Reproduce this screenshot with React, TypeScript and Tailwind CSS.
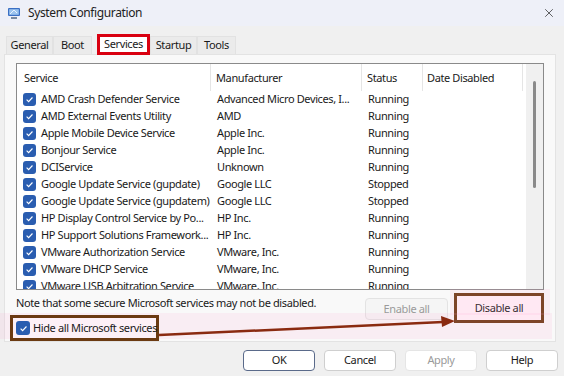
import { X } from "lucide-react";

const font = { fontFamily: '"Segoe UI", "Noto Sans", sans-serif', letterSpacing: "-0.38px" };

const rows = [
  ["AMD Crash Defender Service", "Advanced Micro Devices, I...", "Running"],
  ["AMD External Events Utility", "AMD", "Running"],
  ["Apple Mobile Device Service", "Apple Inc.", "Running"],
  ["Bonjour Service", "Apple Inc.", "Running"],
  ["DCIService", "Unknown", "Running"],
  ["Google Update Service (gupdate)", "Google LLC", "Stopped"],
  ["Google Update Service (gupdatem)", "Google LLC", "Stopped"],
  ["HP Display Control Service by Po...", "HP Inc.", "Running"],
  ["HP Support Solutions Framework...", "HP Inc.", "Running"],
  ["VMware Authorization Service", "VMware, Inc.", "Running"],
  ["VMware DHCP Service", "VMware, Inc.", "Running"],
  ["VMware USB Arbitration Service", "VMware, Inc.", "Running"],
];

const Check = ({ size = 13 }: { size?: number }) => (
  <span
    className="flex items-center justify-center rounded-[3px] bg-[#2a5db0] shrink-0"
    style={{ width: size, height: size }}
  >
    <svg width="9" height="9" viewBox="0 0 10 10" fill="none">
      <path d="M1.8 5.2 L4 7.3 L8.3 2.8" stroke="white" strokeWidth="1.3" />
    </svg>
  </span>
);

const AppIcon = () => (
  <svg width="14" height="13" viewBox="0 0 14 13">
    <rect x="1" y="1" width="12" height="8" rx="1" fill="#3a6fc4" />
    <rect x="2.2" y="2.2" width="9.6" height="5.6" fill="#9cc4ee" />
    <path d="M3 7 L7 3 L10 6" stroke="#e8f2ff" strokeWidth="1" fill="none" />
    <rect x="4" y="10" width="6" height="2" fill="#7a8aa0" />
  </svg>
);

const tabs: [string, string][] = [
  ["General", "w-[47px]"],
  ["Boot", "w-[39px]"],
  ["Services", "w-[53px]"],
  ["Startup", "w-[47px]"],
  ["Tools", "w-[39px]"],
];

const App = () => {
  return (
    <div
      className="relative w-[564px] h-[376px] bg-[#f0f0f0] text-[11px] text-[#1a1a1a] overflow-hidden"
      style={font}
    >
      {/* title bar */}
      <div className="flex items-center h-[26px] bg-[#eef0f8] pl-[7px] pr-[8px]">
        <AppIcon />
        <span className="ml-[7px] text-[12px] text-[#222]">System Configuration</span>
        <X className="ml-auto" size={14} strokeWidth={1.2} color="#222" />
      </div>

      {/* tabs */}
      <div className="flex items-end h-[28px] pl-[6px] pt-[8px]">
        {tabs.map(([t, w]) =>
          t === "Services" ? (
            <div
              key={t}
              className={w + " h-[21px] flex items-center justify-center border-[3px] border-[#d90010] bg-white ml-[5px] -mb-[1px] relative z-10"}
            >
              {t}
            </div>
          ) : (
            <div
              key={t}
              className={w + " h-[18px] flex items-center justify-center bg-[#ebebeb] border border-[#e2e2e2] border-b-0"}
            >
              {t}
            </div>
          )
        )}
      </div>

      {/* tab page */}
      <div className="mx-[4px] h-[288px] w-[552px] bg-[#f9f9f9] border border-[#e3e3e3] pt-[8px] px-[11px]">
        <div className="h-[227px] w-[528px] bg-white border border-[#8a8a8a] flex overflow-hidden">
          <div className="flex-1">
            <div className="flex h-[27px]">
              <div className="w-[194px] pl-[7px] pt-[6px] border-r border-[#e5e5e5]">Service</div>
              <div className="w-[151px] pl-[5px] pt-[6px] border-r border-[#e5e5e5]">Manufacturer</div>
              <div className="w-[61px] pl-[5px] pt-[6px] border-r border-[#e5e5e5]">Status</div>
              <div className="w-[100px] pl-[4px] pt-[6px] border-r border-[#e5e5e5]">Date Disabled</div>
            </div>
            {rows.map(([s, m, st]) => (
              <div key={s} className="flex h-[17px] items-center">
                <div className="w-[194px] pl-[6px] flex items-center gap-[5px] whitespace-nowrap">
                  <Check />
                  {s}
                </div>
                <div className="w-[151px] pl-[6px] whitespace-nowrap overflow-hidden">{m}</div>
                <div className="w-[61px] pl-[6px]">{st}</div>
              </div>
            ))}
          </div>
          <div className="w-[17px] bg-[#f0f0f0] flex justify-center pt-[17px]">
            <div className="w-[3px] h-[107px] rounded-full bg-[#8a8a8a]" />
          </div>
        </div>

        <div className="flex mt-[3px]">
          <div className="pt-[2px]">Note that some secure Microsoft services may not be disabled.</div>
          <div className="ml-auto flex gap-[6px] items-start">
            <div className="w-[83px] h-[22px] mt-[5px] flex items-center justify-center rounded-[4px] border border-[#e3e3e3] bg-[#f5f5f5] text-[#9a9a9a]">
              Enable all
            </div>
            <div className="w-[90px] h-[30px] border-[3px] border-[#6b3a12] bg-[#fff3f9] flex items-center justify-center">
              Disable all
            </div>
          </div>
        </div>

        <div className="-ml-[6px] mt-[-8px] w-[149px] h-[26px] border-[3px] border-[#6b3a12] flex items-center gap-[3px] pl-[3px] relative z-10 bg-[#fdf0f7] whitespace-nowrap">
          <Check size={14} />
          <span>Hide all Microsoft services</span>
        </div>
      </div>

      {/* bottom buttons */}
      <div className="flex justify-end gap-[9px] pr-[6px] mt-[8px]">
        {["OK", "Cancel", "Apply", "Help"].map((b) => (
          <div
            key={b}
            className={
              "w-[72px] h-[21px] flex items-center justify-center rounded-[4px] bg-white border " +
              (b === "OK"
                ? "border-[#5a6a8a]"
                : b === "Apply"
                ? "border-[#e5e5e5] bg-[#f7f7f7] text-[#9a9a9a]"
                : "border-[#cfcfcf]")
            }
          >
            {b}
          </div>
        ))}
      </div>

      {/* annotation: pink glow band */}
      <div className="absolute left-[0px] top-[313px] w-[552px] h-[26px] bg-[#ff9ad0] opacity-[0.12] pointer-events-none" />
      <div className="absolute left-[450px] top-[289px] w-[100px] h-[26px] bg-[#ff9ad0] opacity-[0.12] pointer-events-none" />

      {/* annotation arrow */}
      <svg className="absolute left-0 top-0 pointer-events-none" width="564" height="376">
        <line x1="159" y1="335" x2="443" y2="322" stroke="#8a2a10" strokeWidth="2.5" />
        <polygon points="455,321 441,316 442,327" fill="#8a2a10" />
      </svg>
    </div>
  );
};

export default App;
